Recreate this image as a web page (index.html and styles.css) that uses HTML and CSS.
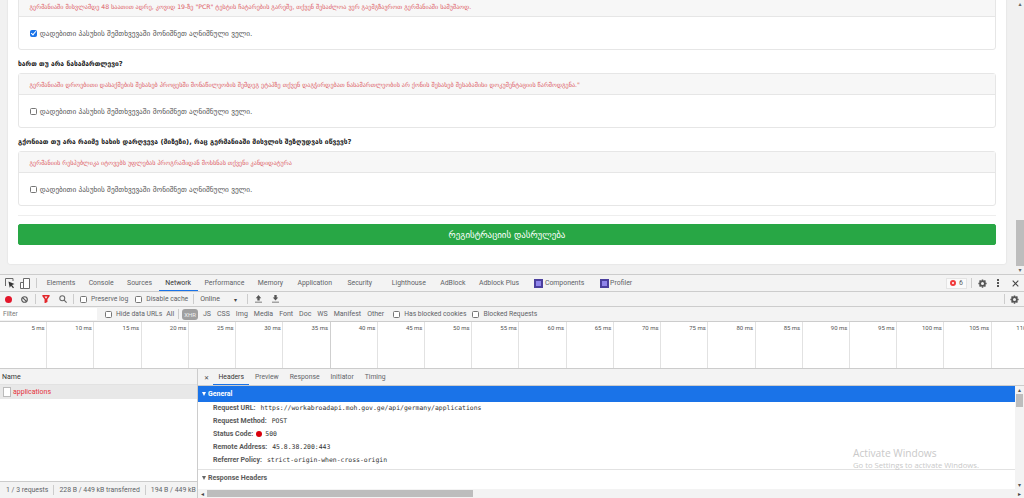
FILE: index.html
```html
<!DOCTYPE html>
<html lang="ka">
<head>
<meta charset="utf-8">
<title>Registration</title>
<link rel="stylesheet" href="styles.css">
</head>
<body>
<div class="viewport">
  <div class="page">
    <div class="card">
      <div class="panel">
        <div class="panel-head">გერმანიაში მისვლამდე 48 საათით ადრე, კოვიდ 19-ზე "PCR" ტესტის ჩატარების გარეშე, თქვენ შესაძლოა ვერ გაემგზავროთ გერმანიაში სამუშაოდ.</div>
        <div class="panel-body"><label class="check"><input type="checkbox" checked> დადებითი პასუხის შემთხვევაში მონიშნეთ აღნიშნული ველი.</label></div>
      </div>
      <h4 class="question">ხართ თუ არა ნასამართლევი?</h4>
      <div class="panel">
        <div class="panel-head">გერმანიაში დროებითი დასაქმების შესახებ პროცესში მონაწილეობის შემდეგ ეტაპზე თქვენ დაგჭირდებათ ნასამართლეობის არ ქონის შესახებ შესაბამისი დოკუმენტაციის წარმოდგენა."</div>
        <div class="panel-body"><label class="check"><input type="checkbox"> დადებითი პასუხის შემთხვევაში მონიშნეთ აღნიშნული ველი.</label></div>
      </div>
      <h4 class="question">გქონიათ თუ არა რაიმე სახის დარღვევა (მიზეზი), რაც გერმანიაში მისვლის შეზღუდვას იწვევს?</h4>
      <div class="panel">
        <div class="panel-head">გერმანიის რესპუბლიკა იტოვებს უფლებას პროგრამიდან მოხსნას თქვენი კანდიდატურა</div>
        <div class="panel-body"><label class="check"><input type="checkbox"> დადებითი პასუხის შემთხვევაში მონიშნეთ აღნიშნული ველი.</label></div>
      </div>
      <hr class="rule">
      <button class="submit">რეგისტრაციის დასრულება</button>
    </div>
    <div class="page-scroll">
      <span class="sb-arrow top">▴</span>
      <span class="sb-thumb"></span>
      <span class="sb-arrow">▾</span>
    </div>
  </div>

  <div class="devtools">
    <div class="tabbar">
      <svg class="ico first-ico" width="10" height="11" viewBox="0 0 10 11"><path d="M.5 8V.5h7.500V3" fill="none" stroke="#6a6a6a"/><path d="M3.500 3.500l6 2.500-2.500 1 2 2.500-1 .7-2-2.500-1.300 2z" fill="#333"/></svg>
      <svg class="ico" width="10" height="11" viewBox="0 0 10 11"><path d="M3.500.5h6v10h-6z M.5 4.500h3v6h-3z" fill="#fff" stroke="#6a6a6a"/></svg>
      <span class="vsep tabsep"></span>
      <span class="tab">Elements</span>
      <span class="tab">Console</span>
      <span class="tab">Sources</span>
      <span class="tab active">Network</span>
      <span class="tab">Performance</span>
      <span class="tab">Memory</span>
      <span class="tab app">Application</span>
      <span class="tab sec">Security</span>
      <span class="tab">Lighthouse</span>
      <span class="tab adb">AdBlock</span>
      <span class="tab">Adblock Plus</span>
      <span class="tab exttab"><i class="ext"></i>Components</span>
      <span class="tab exttab"><i class="ext"></i>Profiler</span>
      <span class="spacer"></span>
      <span class="errors"><i class="err-dot"></i>6</span>
      <span class="vsep tight"></span>
      <svg class="gear" width="9" height="9" viewBox="0 0 12 12"><circle cx="6" cy="6" r="3.200" fill="none" stroke="#555" stroke-width="2.400"/><path d="M6 .5v2M6 9.500v2M.5 6h2M9.500 6h2M2.100 2.100l1.400 1.400M8.500 8.500l1.400 1.400M2.100 9.900l1.400-1.400M8.500 3.500l1.400-1.400" stroke="#555" stroke-width="2"/></svg>
      <span class="dots"><i></i><i></i><i></i></span>
      <svg class="close" width="7" height="7" viewBox="0 0 10 10"><path d="M1 1l8 8M9 1l-8 8" stroke="#444" stroke-width="1.500"/></svg>
    </div>

    <div class="toolbar">
      <i class="rec"></i>
      <svg class="tb-ico clear" width="7" height="7" viewBox="0 0 11 11"><circle cx="5.500" cy="5.500" r="4.400" fill="none" stroke="#555" stroke-width="1.800"/><path d="M2.500 2.500l6 6" stroke="#555" stroke-width="1.800"/></svg>
      <span class="vsep s1"></span>
      <svg class="tb-ico funnel" width="8" height="8" viewBox="0 0 11 11"><path d="M.5 1h10M1.500 1l3 4.500V10l2-1V5.500l3-4.500" fill="none" stroke="#e3262b" stroke-width="2"/></svg>
      <svg class="tb-ico search" width="8" height="8" viewBox="0 0 11 11"><circle cx="4.500" cy="4.500" r="3.400" fill="none" stroke="#666" stroke-width="1.400"/><path d="M7 7l3.500 3.500" stroke="#666" stroke-width="1.600"/></svg>
      <span class="vsep s2"></span>
      <label class="dt-check preserve"><i class="box"></i>Preserve log</label>
      <label class="dt-check"><i class="box"></i>Disable cache</label>
      <span class="vsep s3"></span>
      <span class="online">Online</span><span class="caret">▾</span>
      <span class="vsep s4"></span>
      <svg class="tb-ico up" width="7" height="8" viewBox="0 0 9 10"><path d="M4.500 0L8 4H6v3H3V4H1zM0 8.500h9v1H0z" fill="#555"/></svg>
      <svg class="tb-ico" width="7" height="8" viewBox="0 0 9 10"><path d="M3 0h3v3h2L4.500 7 1 3h2zM0 8.500h9v1H0z" fill="#555"/></svg>
      <span class="spacer"></span>
      <span class="vsep s5"></span>
      <svg class="gear" width="9" height="9" viewBox="0 0 12 12"><circle cx="6" cy="6" r="3.200" fill="none" stroke="#555" stroke-width="2.400"/><path d="M6 .5v2M6 9.500v2M.5 6h2M9.500 6h2M2.100 2.100l1.400 1.400M8.500 8.500l1.400 1.400M2.100 9.900l1.400-1.400M8.500 3.500l1.400-1.400" stroke="#555" stroke-width="2"/></svg>
    </div>

    <div class="filterbar">
      <span class="filter-input">Filter</span>
      <label class="dt-check hide-urls"><i class="box"></i>Hide data URLs</label>
      <span class="ft">All</span>
      <span class="vsep"></span>
      <span class="ft on">XHR</span>
      <span class="ft">JS</span><span class="ft">CSS</span><span class="ft">Img</span><span class="ft">Media</span><span class="ft">Font</span><span class="ft">Doc</span><span class="ft">WS</span><span class="ft">Manifest</span><span class="ft">Other</span>
      <label class="dt-check blocked"><i class="box"></i>Has blocked cookies</label>
      <label class="dt-check blocked"><i class="box"></i>Blocked Requests</label>
    </div>

    <div class="overview">
      <span class="tick">5 ms</span><span class="tick">10 ms</span><span class="tick">15 ms</span><span class="tick">20 ms</span><span class="tick">25 ms</span><span class="tick">30 ms</span><span class="tick">35 ms</span><span class="tick">40 ms</span><span class="tick">45 ms</span><span class="tick">50 ms</span><span class="tick">55 ms</span><span class="tick">60 ms</span><span class="tick">65 ms</span><span class="tick">70 ms</span><span class="tick">75 ms</span><span class="tick">80 ms</span><span class="tick">85 ms</span><span class="tick">90 ms</span><span class="tick">95 ms</span><span class="tick">100 ms</span><span class="tick">105 ms</span><span class="tick">110 ms</span>
    </div>

    <div class="split">
      <div class="list">
        <div class="list-head">Name</div>
        <div class="list-row"><i class="file"></i>applications</div>
        <div class="list-fill"></div>
        <div class="statusbar">
          <span>1 / 3 requests</span><span class="sb-sep"></span><span>228 B / 449 kB transferred</span><span class="sb-sep"></span><span>194 B / 449 kB</span>
        </div>
      </div>
      <div class="detail">
        <div class="detail-tabs">
          <span class="x">✕</span>
          <span class="dtab active">Headers</span><span class="dtab">Preview</span><span class="dtab">Response</span><span class="dtab">Initiator</span><span class="dtab">Timing</span>
        </div>
        <div class="detail-main">
          <div class="detail-content">
            <div class="sect selected"><i class="tri"></i>General</div>
            <div class="kv"><b>Request URL:</b><code>https://workabroadapi.moh.gov.ge/api/germany/applications</code></div>
            <div class="kv"><b>Request Method:</b><code>POST</code></div>
            <div class="kv"><b>Status Code:</b><i class="status-dot"></i><code>500</code></div>
            <div class="kv"><b>Remote Address:</b><code>45.8.38.200:443</code></div>
            <div class="kv"><b>Referrer Policy:</b><code>strict-origin-when-cross-origin</code></div>
            <div class="sect second"><i class="tri dark"></i>Response Headers</div>
          </div>
          <div class="v-scroll"><span class="arrow">▴</span><span class="thumb"></span><span class="fill"></span><span class="arrow">▾</span></div>
        </div>
        <div class="h-scroll"><span class="harrow">◂</span><span class="hthumb"></span><span class="hfill"></span><span class="harrow">▸</span></div>
      </div>
    </div>
    <div class="watermark">
      <div class="wm-title">Activate Windows</div>
      <div class="wm-sub">Go to Settings to activate Windows.</div>
    </div>
  </div>
</div>
</body>
</html>
```

FILE: styles.css
```css
* { box-sizing: border-box; }
html, body { margin: 0; height: 100%; overflow: hidden; }
body { font-family: "DejaVu Sans", "Noto Sans", sans-serif; background: #fff; }
.viewport { width: 1024px; height: 498px; display: flex; flex-direction: column; position: relative; }

/* page */
.page { height: 275px; flex: none; background: #f1f1f1; display: flex; align-items: flex-end; overflow: hidden; border-bottom: 1px solid #ccc; padding-left: 8px; }
.card { width: 998px; flex: none; background: #fff; border-radius: 2px; box-shadow: 0 0 2px rgba(0,0,0,.12); padding: 0 10px 19px; margin-bottom: 10px; }
.panel { height: 55px; border: 1px solid #e6e6e6; border-radius: 3px; }
.panel-head { height: 21px; background: #f7f7f7; border-bottom: 1px solid #e6e6e6; padding: 0 10.500px; display: flex; align-items: center; font-size: 6.180px; color: #dc5a64; white-space: nowrap; overflow: hidden; }
.panel-body { height: 32px; padding: 0 10.500px; display: flex; align-items: center; }
.check { font-size: 7.280px; color: #555; display: flex; align-items: center; white-space: pre; }
.check input { appearance: none; width: 7px; height: 7px; margin: 0 1px 0 0; border: 1px solid #767676; border-radius: 1.500px; background: #fff; position: relative; flex: none; }
.check input:checked { background: #1a73e8; border-color: #1a73e8; }
.check input:checked::after { content: ""; position: absolute; left: 1.500px; top: -.2px; width: 2px; height: 4px; border: solid #fff; border-width: 0 1px 1px 0; transform: rotate(40deg); }
.question { margin: 9px 0 3px; height: 11px; line-height: 11px; font-size: 6.750px; font-weight: bold; color: #222; white-space: nowrap; }
.rule { border: 0; border-top: 1px solid #eee; margin: 9px 0 8px; }
.submit { display: block; width: 100%; height: 21px; border: 1px solid #28a745; border-radius: 2px; background: #28a745; color: #fff; font-family: inherit; font-size: 8.930px; padding: 0; }
.page-scroll { flex: 1; align-self: stretch; display: flex; flex-direction: column; align-items: flex-end; padding-bottom: 1px; }
.sb-thumb { width: 8px; height: 46px; background: #bdbdbd; margin-top: auto; }
.sb-arrow { width: 8px; height: 7px; font-size: 6px; line-height: 7px; text-align: center; color: #666; }

/* devtools */
.devtools { flex: 1; display: flex; flex-direction: column; font-family: Roboto, "Noto Sans", sans-serif; color: #5a5a5a; font-size: 7px; position: relative; min-height: 0; }
.tabbar { height: 17px; flex: none; background: #f3f3f3; border-bottom: 1px solid #ccc; display: flex; align-items: center; padding: 0 5px; }
.ico { margin-right: 5px; flex: none; }
.vsep { width: 1px; height: 10px; background: #ccc; flex: none; }
.tabsep { margin: 0 3px 0 1px; }
.tab { height: 16px; padding: 0 6.700px; font-size: 6.900px; white-space: nowrap; display: flex; align-items: center; color: #5f6368; }
.tab.active { color: #333; border-bottom: 1px solid #1a73e8; }
.tab.app { margin-left: 1px; }
.tab.sec { margin-left: 2px; padding-right: 13px; }
.tab.adb { margin-left: 1px; }
.tab.exttab { margin-left: 2px; }
.ext { width: 9px; height: 9px; background: #8f84ea; border: 2px solid #4b3f9e; margin-right: 1.500px; display: inline-block; }
.spacer { flex: 1; }
.errors { display: flex; align-items: center; gap: 3px; height: 11px; padding: 0 3px; border: 1px solid #e4e4e4; background: #fafafa; font-size: 7px; }
.err-dot { width: 6px; height: 6px; border-radius: 50%; border: 2px solid #f13a3a; background: #fff; }
.vsep.tight { margin: 0 6px 0 4px; }
.gear { flex: none; }
.dots { width: 2px; margin: 0 13px 0 10px; display: flex; flex-direction: column; gap: 1.500px; }
.dots i { width: 1.500px; height: 1.500px; background: #555; }
.close { flex: none; }
.toolbar { height: 15px; flex: none; background: #f3f3f3; border-bottom: 1px solid #ccc; display: flex; align-items: center; padding: 0 5px; }
.rec { width: 7px; height: 7px; border-radius: 50%; background: #e3162b; flex: none; margin-right: 9px; }
.tb-ico { flex: none; }
.s1 { margin: 0 6px 0 7px; }
.search { margin-left: 9px; }
.s2 { margin: 0 6px 0 6px; }
.s3 { margin: 0 6px 0 5px; }
.s4 { margin: 0 7px 0 4px; }
.s5 { margin-right: 5px; }
.dt-check { display: flex; align-items: center; white-space: nowrap; font-size: 6.750px; color: #5f6368; }
.box { width: 7px; height: 7px; border: 1px solid #767676; border-radius: 1.500px; background: #fff; margin-right: 4px; flex: none; }
.preserve { margin-right: 7px; }
.online { font-size: 7px; width: 34px; }
.caret { font-size: 6px; width: 9px; color: #444; }
.up { margin-right: 10px; }
.filterbar { height: 15px; flex: none; background: #f3f3f3; border-bottom: 1px solid #ccc; display: flex; align-items: center; }
.filter-input { width: 97px; height: 12px; line-height: 12px; background: #fff; padding-left: 3px; font-size: 6.600px; color: #777; margin-right: 8px; }
.hide-urls { margin-right: 1px; }
.ft { font-size: 7px; padding: 0 3px; white-space: nowrap; color: #5f6368; }
.ft.on { background: #a0a0a0; color: #eee; border-radius: 3px; height: 11px; line-height: 11px; padding: 0 2px; font-size: 6px; margin-right: 2px; }
.filterbar .vsep { margin: 0 3px 0 1px; }
.blocked { margin-left: 6px; }
.overview { height: 47px; flex: none; background: #fff; border-bottom: 1px solid #ccc; display: flex; overflow: hidden; }
.tick { width: 47.220px; flex: none; height: 46px; border-right: 1px solid #e2e2e2; font-size: 6px; text-align: right; padding: 2px 1.500px 0 0; color: #555; line-height: 8px; white-space: nowrap; }
.tick:nth-child(7) { border-right-color: #cfcfcf; }
.split { flex: 1; min-height: 0; display: flex; }
.list { width: 198px; flex: none; border-right: 1px solid #ccc; display: flex; flex-direction: column; }
.list-head { height: 16px; line-height: 17px; padding-left: 2px; background: #f3f3f3; border-bottom: 1px solid #e2e2e2; font-size: 7px; color: #333; }
.list-row { height: 14px; background: #e8e8e8; display: flex; align-items: center; padding-left: 3px; color: #e6323a; font-size: 7px; }
.file { width: 8px; height: 10px; background: #fff; border: 1px solid #bbb; margin-right: 2px; }
.list-fill { flex: 1; }
.statusbar { height: 17px; background: #f3f3f3; border-top: 1px solid #ccc; display: flex; align-items: center; padding-left: 6px; font-size: 6.900px; color: #5f6368; white-space: nowrap; overflow: hidden; }
.sb-sep { width: 1px; height: 10px; background: #ccc; margin: 0 5px; flex: none; }
.detail { flex: 1; min-width: 0; display: flex; flex-direction: column; }
.detail-tabs { height: 17px; flex: none; background: #f3f3f3; border-bottom: 1px solid #ccc; display: flex; align-items: center; padding-left: 6px; }
.x { font-size: 6px; width: 9px; color: #444; }
.dtab { height: 16px; line-height: 17px; padding: 0 5.500px; font-size: 6.800px; color: #5f6368; }
.dtab.active { color: #333; border-bottom: 1px solid #1a73e8; }
.detail-main { flex: 1; display: flex; min-height: 0; }
.detail-content { flex: 1; min-width: 0; }
.sect { height: 16px; display: flex; align-items: center; padding-left: 4px; font-size: 7px; font-weight: 700; color: #5a5a5a; }
.sect.selected { background: #1a73e8; color: #fff; }
.sect.second { border-top: 1px solid #e2e2e2; height: 18px; margin-top: 3px; }
.tri { width: 0; height: 0; border-left: 2.500px solid transparent; border-right: 2.500px solid transparent; border-top: 4px solid #fff; margin-right: 2px; }
.tri.dark { border-top-color: #666; }
.kv { height: 12.800px; display: flex; align-items: center; padding-left: 15px; font-size: 7px; white-space: nowrap; }
.kv b { font-weight: 700; color: #5a5a5a; margin-right: 5px; }
.kv code { font-family: "DejaVu Sans Mono", monospace; font-size: 6.450px; color: #333; }
.status-dot { width: 6px; height: 6px; border-radius: 50%; background: #d9000d; margin: 0 3px 0 -2px; flex: none; }
.v-scroll { width: 9px; flex: none; background: #f3f3f3; display: flex; flex-direction: column; align-items: center; }
.arrow { height: 8px; line-height: 8px; font-size: 6px; color: #555; }
.thumb { width: 7px; height: 13px; background: #bdbdbd; }
.fill { flex: 1; }
.h-scroll { height: 9px; flex: none; background: #f3f3f3; display: flex; align-items: center; }
.harrow { width: 9px; font-size: 6px; text-align: center; color: #444; }
.hthumb { width: 266px; height: 7px; background: #bdbdbd; }
.hfill { flex: 1; }
.watermark { position: absolute; left: 853px; top: 172px; color: #c9c9c9; font-family: "Open Sans", sans-serif; white-space: nowrap; }
.wm-title { font-size: 10.200px; line-height: 12px; }
.wm-sub { font-size: 7.700px; line-height: 12px; }
```
